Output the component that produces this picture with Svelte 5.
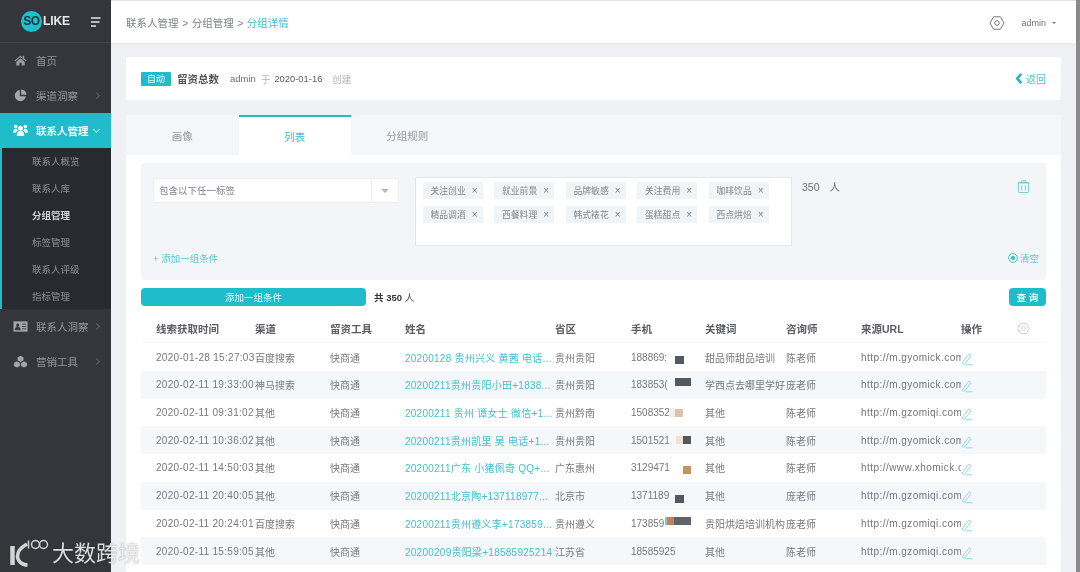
<script>
  const nav = [
    { label: '联系人概览' }, { label: '联系人库' }, { label: '分组管理', on: true },
    { label: '标签管理' }, { label: '联系人评级' }, { label: '指标管理' }
  ];
  const tags = ['关注创业','就业前景','品牌敏感','关注费用','咖啡饮品','精品调酒','西餐料理','韩式裱花','蛋糕甜点','西点烘焙'];
  const heads = ['线索获取时间','渠道','留资工具','姓名','省区','手机','关键词','咨询师','来源URL','操作'];
  const rows = [
    { t:'2020-01-28 15:27:03', c:'百度搜索', n:'20200128 贵州兴义 黄茜 电话...', p:'贵州贵阳', m:'188869:', k:'甜品师甜品培训', a:'陈老师', u:'http://m.gyomick.com',
      b:[[44,13,9,8,'#55585c']] },
    { t:'2020-02-11 19:33:00', c:'神马搜索', n:'20200211贵州贵阳小田+1838...', p:'贵州贵阳', m:'183853(', k:'学西点去哪里学好', a:'庞老师', u:'http://m.gyomick.com',
      b:[[44,7,16,8,'#55585c']] },
    { t:'2020-02-11 09:31:02', c:'其他', n:'20200211 贵州 谭女士 微信+1...', p:'贵州黔南', m:'1508352', k:'其他', a:'陈老师', u:'http://m.gzomiqi.com',
      b:[[44,10,8,8,'#d9c3ad'],[38,9,6,9,'#f8efe4'],[74,9,5,9,'#f1ebe7']] },
    { t:'2020-02-11 10:36:02', c:'其他', n:'20200211贵州凯里 吴 电话+1...', p:'贵州贵阳', m:'1501521', k:'其他', a:'陈老师', u:'http://m.gyomick.com',
      b:[[45,10,7,8,'#efe2d0'],[52,10,8,8,'#55585c'],[74,9,3,9,'#ece6e1']] },
    { t:'2020-02-11 14:50:03', c:'其他', n:'20200211广东 小猪佩奇 QQ+...', p:'广东惠州', m:'3129471', k:'其他', a:'陈老师', u:'http://www.xhomick.com',
      b:[[52,12,8,8,'#c8925f']] },
    { t:'2020-02-11 20:40:05', c:'其他', n:'20200211北京陶+137118977...', p:'北京市', m:'1371189', k:'其他', a:'庞老师', u:'http://m.gzomiqi.com',
      b:[[44,13,9,8,'#55585c']] },
    { t:'2020-02-11 20:24:01', c:'百度搜索', n:'20200211贵州遵义李+173859...', p:'贵州遵义', m:'173859', k:'贵阳烘焙培训机构', a:'庞老师', u:'http://m.gzomiqi.com',
      b:[[34,7,2,8,'#7cc6dc'],[36,7,7,8,'#c87f55'],[43,7,17,8,'#5e6468']] },
    { t:'2020-02-11 15:59:05', c:'其他', n:'20200209贵阳梁+18585925214', p:'江苏省', m:'18585925', k:'其他', a:'陈老师', u:'http://m.gzomiqi.com', b:[] }
  ];
</script>

<div class="app">
  <aside class="side">
    <div class="brand">
      <span class="logo"><span class="so">SO</span><span class="like">LIKE</span></span>
      <svg class="burger" viewBox="0 0 10 10" width="10" height="10"><path d="M0 1h9.500M0 5h8.500M0 9h5" stroke="#e8e8e8" stroke-width="1.400"/></svg>
    </div>
    <nav>
      <div class="item">
        <svg viewBox="0 0 14 14"><path d="M7 1.500 0.500 7l.8.9L7 3.200l5.700 4.700.8-.9-2.500-2.100V2h-1.600v2.400zM2.500 8.400V12.500h3.300V9.300h2.400v3.200h3.300V8.400L7 4.600z" fill="#9a9ba0"/></svg>
        <span>首页</span>
      </div>
      <div class="item">
        <svg viewBox="0 0 14 14"><path d="M6.300 1.200a6 6 0 1 0 6.500 6.500H6.300zM7.700.5v5.800h5.800A5.800 5.800 0 0 0 7.700.5z" fill="#a5a6ab"/></svg>
        <span>渠道洞察</span><i class="chev"></i>
      </div>
      <div class="item active">
        <svg viewBox="0 0 16 14"><circle cx="8" cy="4.500" r="2.700" fill="#fff"/><circle cx="2.800" cy="2.600" r="1.900" fill="#fff"/><circle cx="13.200" cy="2.600" r="1.900" fill="#fff"/><path d="M4 13c-.2-3.500 1-5.500 4-5.500s4.200 2 4 5.500zM.2 9.300c-.2-3 .7-4.400 3.800-4.100.2 1 .6 1.500 1 2-1.300.6-1.900 1.400-2.200 2.600zM15.800 9.300c.2-3-.7-4.400-3.800-4.100-.2 1-.6 1.500-1 2 1.300.6 1.900 1.400 2.200 2.600z" fill="#fff"/></svg>
        <span>联系人管理</span><i class="chev down"></i>
      </div>
      <ul class="sub">
        {#each nav as n}
          <li class:on={n.on}>{n.label}</li>
        {/each}
      </ul>
      <div class="item">
        <svg viewBox="0 0 16 13"><rect x=".5" y="1" width="15" height="11" fill="#a5a6ab"/><circle cx="5" cy="5" r="1.700" fill="#35363c"/><path d="M2.300 10c0-2 1-3 2.700-3s2.700 1 2.700 3zM9.500 4h4.500M9.500 6.500h4.500M9.500 9h4.500" fill="#35363c" stroke="#35363c" stroke-width=".9"/></svg>
        <span>联系人洞察</span><i class="chev"></i>
      </div>
      <div class="item">
        <svg viewBox="0 0 16 14"><path d="M8 .5 11.600 2.300V6L8 7.800 4.400 6V2.300zM4.200 6.500 7.800 8.300v3.700L4.200 13.800.6 12V8.300zM11.800 6.500l3.600 1.800V12l-3.600 1.800L8.200 12V8.300z" fill="#a5a6ab" stroke="#35363c" stroke-width=".7"/></svg>
        <span>营销工具</span><i class="chev"></i>
      </div>
    </nav>
  </aside>

  <main class="main">
    <header class="top">
      <div class="crumb">联系人管理 &gt; 分组管理 &gt; <em>分组详情</em></div>
      <div class="user">
        <svg viewBox="0 0 16 16" width="16" height="16" fill="none" stroke="#777" stroke-width="1"><path d="M4.600 1.800h6.800L15 8l-3.600 6.200H4.600L1 8z" stroke-linejoin="round"/><circle cx="8" cy="8" r="2.300"/></svg>
        <span class="uname">admin</span>
        <i class="caret"></i>
      </div>
    </header>

    <div class="content">
      <section class="info">
        <span class="badge">自动</span>
        <strong>留资总数</strong>
        <span class="meta by">admin</span>
        <span class="meta faint yu">于</span>
        <span class="meta date">2020-01-16</span>
        <span class="meta faint made">创建</span>
        <a class="back">
          <svg viewBox="0 0 8 12" width="8" height="11"><path d="M6.500 1 2 6l4.500 5" fill="none" stroke="#1fb5c4" stroke-width="2.800"/></svg>
          返回
        </a>
      </section>

      <section class="card">
        <div class="tabs">
          <div class="tab">画像</div>
          <div class="tab cur">列表</div>
          <div class="tab">分组规则</div>
        </div>

        <div class="body">
          <div class="panel">
            <div class="cond">
              <div class="select">
                <span class="val">包含以下任一标签</span>
                <span class="arrow"><i></i></span>
              </div>
              <div class="tagbox">
                {#each tags as t}
                  <span class="tag">{t}<b>×</b></span>
                {/each}
              </div>
              <div class="count"><span>350</span><span>人</span></div>
              <svg class="trash" viewBox="0 0 14 14" width="13" height="13" fill="none" stroke="#62cfd8" stroke-width="1"><path d="M.5 3h13M4.500 3V1h5v2"/><rect x="1.500" y="3" width="11" height="10.500" rx="1"/><path d="M5 6v5M9 6v5"/></svg>
            </div>
            <div class="foot">
              <span class="add">+ 添加一组条件</span>
              <span class="clear">
                <svg viewBox="0 0 10 10" width="10" height="10" fill="none" stroke="#3fc2cd" stroke-width="1"><circle cx="5" cy="5" r="4.300"/><circle cx="5" cy="5" r="1.700" fill="#3fc2cd"/></svg>
                清空
              </span>
            </div>
          </div>

          <div class="bar">
            <button class="wide">添加一组条件</button>
            <span class="total"><b>共 350</b> 人</span>
            <button class="query">查 询</button>
          </div>

          <div class="table">
            <div class="row head">
              {#each heads as h}<div>{h}</div>{/each}
              <div class="cog">
                <svg viewBox="0 0 14 14" width="13" height="13" fill="none" stroke="#c9cbd0" stroke-width="1"><path d="M4 1.500h6L13 7l-3 5.500H4L1 7z"/><circle cx="7" cy="7" r="2"/><path d="M1 4h2M1 10h2"/></svg>
              </div>
            </div>
            {#each rows as r}
              <div class="row">
                <div class="time">{r.t}</div>
                <div>{r.c}</div>
                <div>快商通</div>
                <div class="name">{r.n}</div>
                <div>{r.p}</div>
                <div class="phone">
                  {r.m}
                  {#each r.b as b}
                    <i class="mask" style="left:{b[0]}px;top:{b[1]}px;width:{b[2]}px;height:{b[3]}px;background:{b[4]}"></i>
                  {/each}
                </div>
                <div>{r.k}</div>
                <div>{r.a}</div>
                <div class="url">{r.u}</div>
                <div class="ops">
                  <svg viewBox="0 0 12 13" width="12" height="13" fill="none" stroke="#86d4de" stroke-width=".9"><path d="M1.200 10 7.500 1.500c1-.8 2.600.4 2.200 1.600L4 10.800c-1 .8-2.400.6-2.800-.8zM5 11.800h6.500"/></svg>
                </div>
                <div></div>
              </div>
            {/each}
          </div>
        </div>
      </section>
    </div>
  </main>
  <div class="edge"></div>

  <div class="mark">
    <svg viewBox="0 0 40 28" width="40" height="28" fill="none" stroke="#e6e6e6">
      <path d="M3.500 7v19" stroke-width="4.500"/>
      <path d="M18 5C11 9 8.500 14 8.500 17c0 5 4 9 10 9" stroke-width="3.500"/>
      <path d="M19.500 1.500v8" stroke-width="1.500"/>
      <circle cx="26.500" cy="5.500" r="4" stroke-width="1.500"/>
      <circle cx="34.500" cy="5.500" r="4" stroke-width="1.500"/>
    </svg>
    <span>大数跨境</span>
  </div>
</div>

<style>
  :global(body) { margin: 0; background: #f0f1f4; }
  :global(html), :global(body) { overflow: hidden; }
  .app {
    position: relative;
    display: flex;
    width: 1080px;
    height: 572px;
    overflow: hidden;
    font-family: "Liberation Sans", "Noto Sans CJK SC", sans-serif;
    font-size: 10px;
    color: #777;
    background: #f0f1f4;
    filter: blur(.45px);
  }
  .side { width: 111px; flex: none; background: #35363c; color: #95969b; }
  .brand {
    height: 43px;
    display: flex;
    align-items: center;
    justify-content: space-between;
    padding: 0 10px 0 21px;
    box-sizing: border-box;
    border-bottom: 1px solid #46474d;
  }
  .logo { display: flex; align-items: center; color: #e9e9e9; font-weight: 700; }
  .so {
    width: 21px; height: 21px; border-radius: 50%;
    background: #1fc0cc; color: #24323c;
    display: flex; align-items: center; justify-content: center;
    font-size: 12px; letter-spacing: -.3px;
  }
  .like { font-size: 12px; margin-left: 1px; letter-spacing: -.1px; }
  .burger { margin-top: 1px; }
  .item {
    height: 35px;
    display: flex;
    align-items: center;
    padding-left: 13px;
    font-size: 10.500px;
    position: relative;
  }
  .item svg { width: 15px; height: 13px; margin-right: 8px; flex: none; }
  .item span { white-space: nowrap; }
  .item.active { background: #1fbccb; color: #f3fbfc; font-weight: 700; }
  .chev {
    position: absolute; left: 94px; top: 15px;
    width: 4px; height: 4px;
    border-top: 1px solid #5f6065; border-right: 1px solid #5f6065;
    transform: rotate(45deg);
  }
  .chev.down { border-color: #a9e6ec; left: 94px; top: 14px; transform: rotate(135deg); }
  .sub {
    margin: 0; padding: 0 0 0 30px;
    list-style: none;
    height: 161px;
    background: #292a2f;
    border-left: 2px solid #1fbccb;
    box-sizing: border-box;
  }
  .sub li { height: 27px; line-height: 27px; font-size: 9.500px; color: #8f9095; }
  .sub li.on { color: #d5d6d8; font-weight: 700; }

  .main { flex: 1; min-width: 0; display: flex; flex-direction: column; }
  .edge { width: 4px; flex: none; background: #8b8b8d; }
  .top {
    height: 43px; flex: none;
    background: #fff;
    box-shadow: 0 1px 3px rgba(0,0,0,.06);
    border-top: 1px solid #e3e3e3;
    box-sizing: border-box;
    display: flex;
    align-items: center;
    justify-content: space-between;
    padding: 1px 20px 0 15px;
    position: relative;
  }
  .crumb { font-size: 10.500px; color: #7d8087; word-spacing: .6px; }
  .crumb em { font-style: normal; color: #44bfcb; }
  .user { display: flex; align-items: center; }
  .uname { margin: 0 6px 0 16px; font-size: 9px; color: #707070; }
  .caret { width: 0; height: 0; border: 2px solid transparent; border-top: 2.500px solid #777; margin-top: 2.500px; }

  .content { padding: 14px 15px 0; flex: 1; min-height: 0; display: flex; flex-direction: column; }
  .info {
    height: 43px; flex: none;
    background: #fff;
    display: flex;
    align-items: center;
    padding: 0 15px;
    border-radius: 2px;
  }
  .badge {
    width: 30px; height: 14px; line-height: 14px;
    text-align: center; color: #eafafb;
    background: #1fbccb; border-radius: 1px; font-size: 9px;
  }
  .info strong { margin-left: 6px; font-size: 10.500px; font-weight: 700; color: #55565b; }
  .meta { font-size: 9.500px; color: #707074; }
  .faint { color: #b2b3b6; }
  .by { margin-left: 11px; }
  .yu { margin-left: 5px; }
  .date { margin-left: 4px; color: #5d5d60; font-size: 9.400px; }
  .made { margin-left: 10px; }
  .back {
    margin-left: auto; display: flex; align-items: center; gap: 3px;
    color: #4cc3cf; font-size: 10px;
  }

  .card {
    margin-top: 15px; flex: 1;
    background: #fff;
    border-radius: 3px 3px 0 0;
    display: flex; flex-direction: column;
    min-height: 0;
  }
  .tabs { height: 40px; flex: none; display: flex; background: #f5f6fa; border-radius: 3px 3px 0 0; }
  .tab {
    width: 112.500px;
    display: flex; align-items: center; justify-content: center;
    font-size: 10.500px; color: #95969b;
  }
  .tab.cur {
    background: #fff; color: #3cc0cc;
    border-top: 2px solid #1fbccb;
    box-sizing: border-box;
  }
  .body { padding: 8px 15px 0; }
  .panel {
    height: 117px;
    background: #f3f5f9;
    border-radius: 3px;
    box-sizing: border-box;
    padding: 14px 12px 10px;
    display: flex; flex-direction: column;
  }
  .cond { display: flex; align-items: flex-start; height: 69px; position: relative; }
  .select {
    width: 246px; height: 25px; margin-top: 1px;
    background: #fff; border: 1px solid #eceef2;
    box-sizing: border-box;
    display: flex; align-items: center; justify-content: space-between;
    border-radius: 2px;
  }
  .val { padding: 0 0 2px 5px; font-size: 9.500px; color: #808185; }
  .arrow {
    width: 26px; height: 100%;
    border-left: 1px solid #eceef2;
    display: flex; align-items: center; justify-content: center;
  }
  .arrow i { width: 0; height: 0; border: 4px solid transparent; border-top: 4px solid #b4b6ba; margin-top: 4px; }
  .tagbox {
    margin-left: 16px;
    width: 377px; height: 69px;
    background: #fff; border: 1px solid #e4e6ea;
    box-sizing: border-box;
    padding: 4px 6.500px;
    display: grid;
    grid-template-columns: repeat(5, 60px);
    grid-auto-rows: 17px;
    column-gap: 11.500px;
    row-gap: 7px;
  }
  .tag {
    background: #f1f4f7;
    display: flex; align-items: center; justify-content: space-between;
    padding: 0 5px 0 8px;
    font-size: 8.800px; color: #85868a;
    white-space: nowrap;
  }
  .tag b { font-weight: 400; font-size: 10px; color: #7b7c80; }
  .count { margin-left: 10px; font-size: 10.500px; color: #6f7074; display: flex; gap: 10px; height: 19px; align-items: center; }
  .trash { position: absolute; right: 4px; top: 3px; }
  .foot { height: 24px; display: flex; align-items: center; justify-content: space-between; }
  .add { color: #5cc7d1; font-size: 9.500px; }
  .clear { color: #5cc7d1; font-size: 9.500px; display: flex; align-items: center; gap: 2px; margin-right: -5px; }

  .bar { display: flex; align-items: center; height: 18px; margin-top: 8px; }
  button {
    border: 0; padding: 0; height: 18px; color: #e7f9fa;
    background: #1fbccb; font: inherit; font-size: 9.500px;
    border-radius: 4px;
  }
  .wide { width: 225px; }
  .total { margin-left: 8px; color: #4f4f52; font-size: 9.500px; }
  .total b { color: #333; }
  .query { margin-left: auto; width: 37px; font-weight: 700; }

  .table { margin-top: 8px; }
  .row {
    display: grid;
    grid-template-columns: 99px 75px 75px 150px 76px 74px 81px 75px 100px 56px 1fr;
    height: 27.700px;
    padding-left: 15px;
    align-items: center;
    font-size: 10px;
    color: #77787d;
    white-space: nowrap;
  }
  .row:nth-child(odd) { background: #f5f8fb; }
  .row.head {
    height: 29.400px;
    color: #5c5d62; font-size: 10.500px; font-weight: 700;
    background: #fff; border-bottom: 1px solid #f6f6f7; box-sizing: border-box;
  }
  .row > div { overflow: hidden; position: relative; height: 100%; display: flex; align-items: center; }
  .time { letter-spacing: .3px; }
  .name { color: #45bfcd; letter-spacing: .25px; }
  .url { letter-spacing: .45px; color: #73747a; }
  .ops svg { margin-top: 4px; }
  .mask { position: absolute; }

  .mark {
    position: absolute; left: 9px; top: 537px;
    display: flex; align-items: center; gap: 3px;
    color: #eeeeee;
    font-size: 22px;
    font-weight: 400;
    line-height: 28px;
    opacity: .9;
  }
  .mark span { margin-top: 3px; text-shadow: 0 0 1.500px rgba(0,0,0,.45); }
</style>
